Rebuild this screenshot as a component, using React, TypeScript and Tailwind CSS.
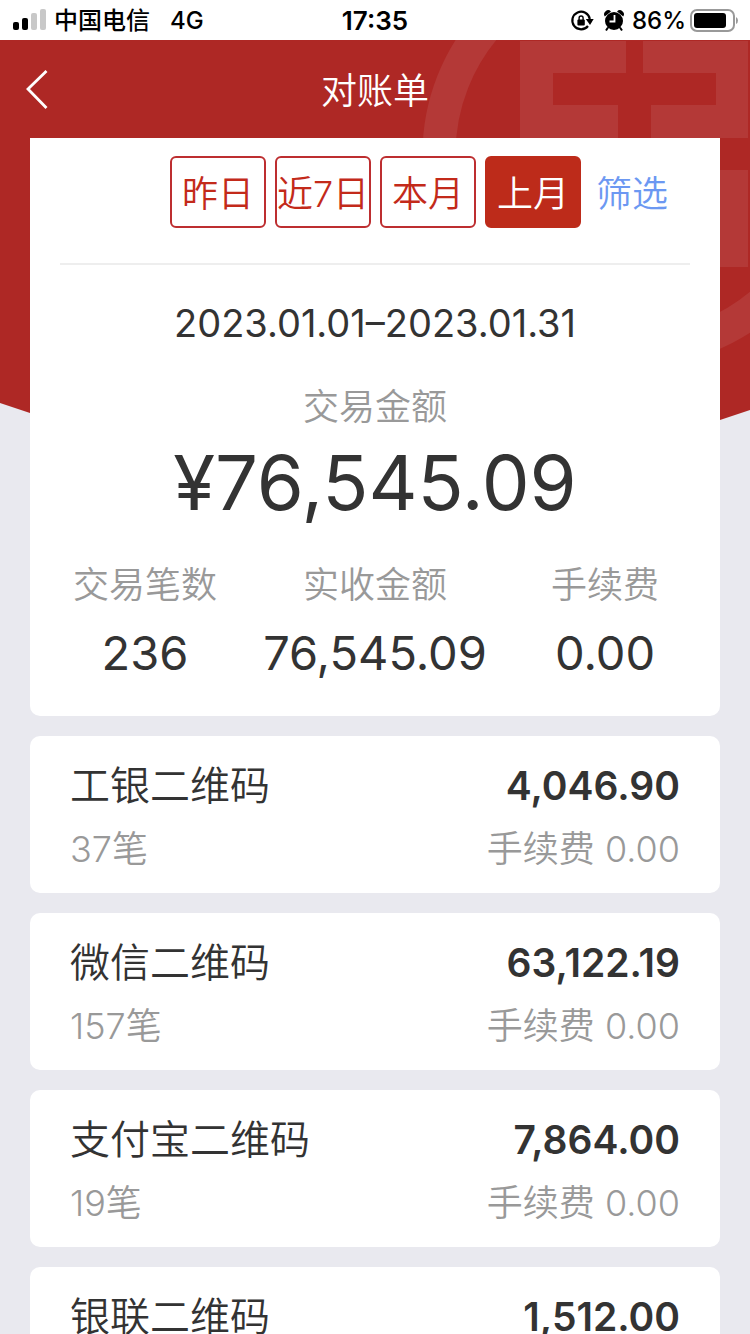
type Channel = {
  name: string;
  amount: string;
  count: string;
  fee: string;
};

const ranges = ["昨日", "近7日", "本月", "上月"];

const totals = [
  { label: "交易笔数", value: "236" },
  { label: "实收金额", value: "76,545.09" },
  { label: "手续费", value: "0.00" },
];

const channels: Channel[] = [
  { name: "工银二维码", amount: "4,046.90", count: "37笔", fee: "0.00" },
  { name: "微信二维码", amount: "63,122.19", count: "157笔", fee: "0.00" },
  { name: "支付宝二维码", amount: "7,864.00", count: "19笔", fee: "0.00" },
  { name: "银联二维码", amount: "1,512.00", count: "23笔", fee: "0.00" },
];

const StatusBar: React.FC = () => {
  return (
    <div className="grid h-10 grid-cols-3 items-center bg-white pl-3 pr-3 pt-0.5 text-2xl font-medium text-black">
      <div className="flex items-center">
        <svg className="mr-1.5 h-6 w-9" viewBox="0 0 36 24" aria-hidden="true">
          <rect x="1" y="13" width="6" height="8" rx="2" />
          <rect x="10" y="9" width="6" height="12" rx="2" />
          <rect x="19" y="4" width="6" height="17" rx="2" fill="#c8c8c8" />
          <rect x="28" y="0" width="6" height="21" rx="2" fill="#c8c8c8" />
        </svg>
        <span>中国电信</span>
        <span className="ml-5">4G</span>
      </div>
      <span className="text-center text-[26px] font-semibold">17:35</span>
      <div className="flex items-center justify-end">
        <svg className="mr-2.5 h-6 w-6" viewBox="0 0 24 24" aria-hidden="true">
          <path
            d="M18 17A8.800 8.800 0 1 1 19.800 10"
            fill="none"
            stroke="#000"
            strokeWidth="2.200"
          />
          <path d="M15.800 10h7.900l-3.700 6z" />
          <rect x="7.400" y="10.500" width="7.400" height="6" rx="1" />
          <path
            d="M9.100 11V9a2 2 0 0 1 4 0v2"
            fill="none"
            stroke="#000"
            strokeWidth="1.400"
          />
        </svg>
        <svg className="mr-2 h-6 w-5" viewBox="0 0 20 24" aria-hidden="true">
          <circle cx="10" cy="12" r="9" />
          <path d="M.8 7.500a4 4 0 0 1 6.200-5z M19.200 7.500a4 4 0 0 0-6.200-5z" />
          <path d="M4 18.500l-2 3M16 18.500l2 3" stroke="#000" strokeWidth="2" />
          <path d="M10.500 6v6.500H5.500" fill="none" stroke="#fff" strokeWidth="1.800" />
        </svg>
        <span>86%</span>
        <svg className="ml-1 h-6 w-12" viewBox="0 0 48 24" aria-hidden="true">
          <rect
            x="1"
            y="1"
            width="43"
            height="21"
            rx="6"
            fill="none"
            stroke="#999"
            strokeWidth="2"
          />
          <rect x="4" y="4" width="32" height="15" rx="3" />
          <path d="M46 8v7q2-1 2-3.500t-2-3.500z" fill="#999" />
        </svg>
      </div>
    </div>
  );
};

const Backdrop: React.FC = () => {
  return (
    <svg
      className="absolute inset-x-0 top-0 w-full"
      viewBox="0 0 750 440"
      aria-hidden="true"
    >
      <path d="M0 0H750V370L720 380Q375 490 30 373L0 363Z" fill="#ae2825" />
      <g fill="#b43937">
        <path d="M520 1H626V33H553V65H618V98H520Z" />
        <path d="M748 1H643V33H716V65H651V98H748Z" />
        <path d="M520 227H626V196H553V164H618V130H520Z" />
        <path d="M748 227H643V196H716V164H651V130H748Z" />
      </g>
      <circle
        cx="635"
        cy="114"
        r="196"
        fill="none"
        stroke="#b43937"
        strokeWidth="33"
      />
    </svg>
  );
};

const Summary: React.FC = () => {
  return (
    <section className="rounded-b-[10px] bg-white pb-[27px] text-[#333]">
      <div className="mx-[30px] flex h-[127px] items-start justify-end gap-[9px] border-b-2 border-[#eee] pr-[22px] pt-[18px] text-4xl">
        {ranges.map((range) => (
          <button
            key={range}
            type="button"
            className={
              range === "上月"
                ? "flex h-18 w-24 items-center justify-center rounded-md border-2 border-[#bd2b1a] bg-[#bd2b1a] pt-1 whitespace-nowrap text-white"
                : "flex h-18 w-24 items-center justify-center rounded-md border-2 border-[#bd2e30] pt-1 whitespace-nowrap text-[#c32a1a]"
            }
          >
            {range}
          </button>
        ))}
        <button type="button" className="ml-1.5 h-18 pt-1 text-[#6c98f2]">
          筛选
        </button>
      </div>
      <p className="mt-8 text-center text-[38px]/13 font-normal">
        2023.01.01–2023.01.31
      </p>
      <h2 className="mt-8 text-center text-4xl/13 text-[#999]">交易金额</h2>
      <p className="text-center text-[76px]/[98px] font-normal">¥76,545.09</p>
      <dl className="mt-7 grid grid-cols-3 text-center">
        {totals.map((total) => (
          <div key={total.label}>
            <dt className="text-4xl/13 text-[#999]">{total.label}</dt>
            <dd className="mt-1.5 text-[47px]/18 font-normal">{total.value}</dd>
          </div>
        ))}
      </dl>
    </section>
  );
};

const ChannelCard: React.FC<{ channel: Channel }> = ({ channel }) => {
  return (
    <li className="rounded-[10px] bg-white px-10 pb-[18px] pt-[21px]">
      <div className="flex items-center justify-between text-[40px]/[58px] text-[#333]">
        <h3>{channel.name}</h3>
        <span className="text-[39px] font-semibold">{channel.amount}</span>
      </div>
      <div className="mt-2 flex items-center justify-between text-4xl/13 text-[#999]">
        <span>{channel.count}</span>
        <span>手续费 {channel.fee}</span>
      </div>
    </li>
  );
};

const App: React.FC = () => {
  return (
    <div className="min-h-screen bg-[#e9e9ef] pb-5 font-['Inter','Noto_Sans_CJK_SC',sans-serif]">
      <StatusBar />
      <div className="relative font-[350]">
        <Backdrop />
        <div className="relative">
          <header className="grid h-[98px] grid-cols-3 items-center px-6 text-white">
            <button type="button" aria-label="返回" className="w-7">
              <svg viewBox="0 0 28 44" className="h-11 w-7" aria-hidden="true">
                <path
                  d="M22.500 4L4 22l18.500 19"
                  fill="none"
                  stroke="#fff"
                  strokeWidth="2.800"
                />
              </svg>
            </button>
            <h1 className="pt-1 text-center text-4xl">对账单</h1>
          </header>
          <main className="px-[30px]">
            <Summary />
            <ul className="mt-5 space-y-5">
              {channels.map((channel) => (
                <ChannelCard key={channel.name} channel={channel} />
              ))}
            </ul>
          </main>
        </div>
      </div>
    </div>
  );
};

export default App;
